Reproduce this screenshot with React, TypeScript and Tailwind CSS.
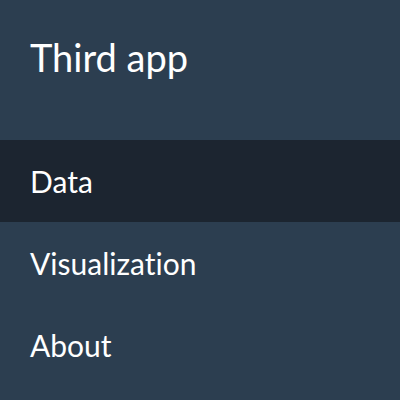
const items = ["Data", "Visualization", "About"]

export default function App() {
    const active = "Data"

    return (
        <div className="w-[400px] h-[400px] bg-[#2c3e50] text-white font-['Lato',sans-serif] [font-variant-ligatures:none] flex flex-col">
            <div className="h-[140px] px-[30px] pt-[35px]">
                <h1 className="text-[38px] leading-[1.2]">Third app</h1>
            </div>
            <nav className="flex flex-col">
                {items.map((item) => (
                    <a
                        key={item}
                        className={
                            item === active
                                ? "h-[82px] px-[30px] flex items-center text-[30px] leading-[1.2] bg-[#1c2530]"
                                : "h-[82px] px-[30px] flex items-center text-[30px] leading-[1.2]"
                        }
                    >
                        {item}
                    </a>
                ))}
            </nav>
        </div>
    )
}
